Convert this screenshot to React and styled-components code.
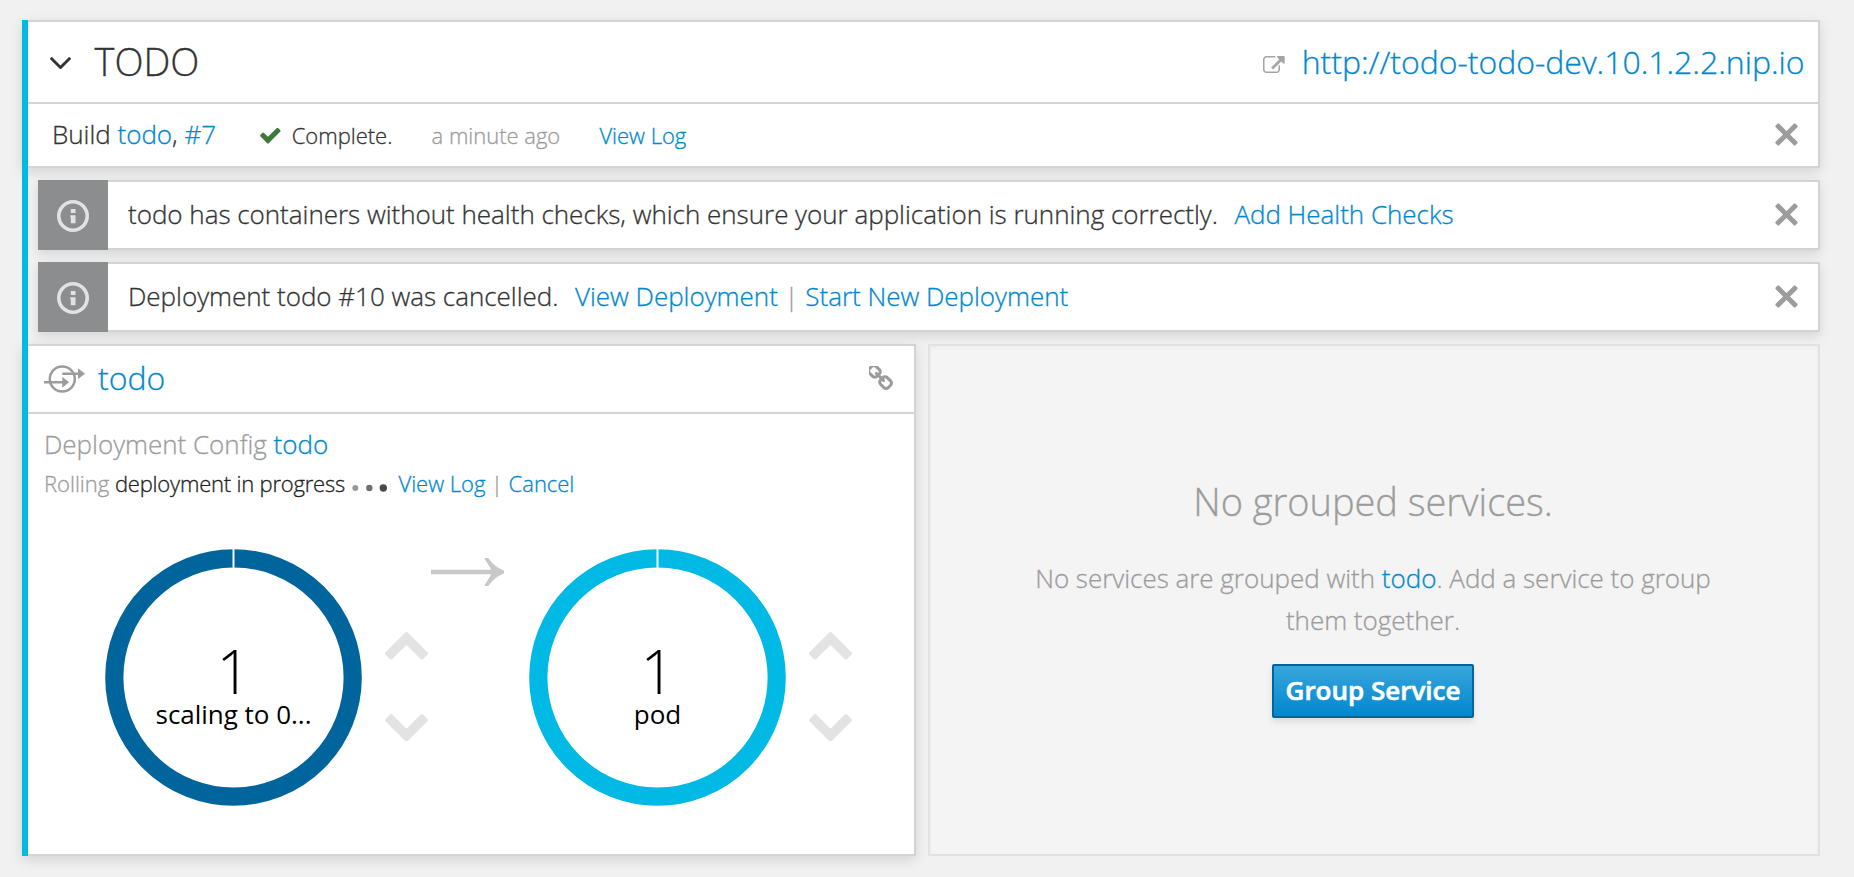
import React from 'react';
import styled, { createGlobalStyle } from 'styled-components';

const GlobalStyle = createGlobalStyle`
  * { box-sizing: border-box; }
  body {
    margin: 0;
    background: #f1f1f1;
    color: #333;
    font-family: "Open Sans", "Noto Sans", sans-serif;
    font-size: 26px;
    font-weight: 300;
    line-height: 42px;
    letter-spacing: -0.02px;
    -webkit-text-stroke: 0.3px currentColor;
  }
`;

const Page = styled.main`
  width: 1854px;
  height: 877px;
  overflow: hidden;
  padding: 20px 34px 0 22px;
`;

const ServiceGroup = styled.section`
  position: relative;
  height: 836px;
  &::before {
    content: "";
    position: absolute;
    inset: 0 auto 0 0;
    width: 6px;
    background: #00b9e4;
  }
`;

const Card = styled.div`
  border: 2px solid #d3d3d3;
  background: #fff;
  box-shadow: 0 4px 12px rgba(3, 3, 3, 0.12);
`;

const Link = styled.a`
  color: #0088ce;
  text-decoration: none;
  cursor: pointer;
`;

const Muted = styled.span`
  color: #9c9c9c;
`;

const GroupCard = styled(Card)`
  height: 148px;
`;

const GroupHeader = styled.header`
  display: flex;
  align-items: center;
  height: 82px;
  padding: 0 13.5px 2px 26px;
  border-bottom: 2px solid #d3d3d3;
`;

const GroupTitle = styled.h2`
  margin: 0 auto 0 23.5px;
  font-size: 38px;
  font-weight: 300;
  line-height: 50px;
`;

const ExternalIcon = styled.svg`
  margin-top: 8px;
`;

const AngleIcon = styled.svg`
  margin-top: 4px;
`;

const RouteLink = styled(Link)`
  margin: 2px 0 0 17px;
  font-size: 32px;
  line-height: 50px;
`;

const BuildRow = styled.div`
  display: flex;
  align-items: center;
  height: 62px;
  padding: 0 20px 2px 28px;
`;

const BuildInfo = styled.div`
  display: flex;
  flex: 1;
  align-items: baseline;
`;

const BuildStatus = styled.div`
  display: flex;
  align-items: baseline;
  gap: 39.2px;
  margin-left: 44px;
  font-size: 22px;
`;

const Complete = styled.span`
  display: flex;
  align-items: baseline;
  gap: 11px;
`;

const CloseButton = styled.button`
  display: flex;
  padding: 0;
  border: 0;
  background: none;
  cursor: pointer;
`;

const Alert = styled(Card)`
  display: flex;
  align-items: center;
  height: 70px;
  margin: 12px 0 0 16px;
  padding: 0 20px 2px 0;
  border-left: 0;
  border-radius: 0 2px 2px 0;
`;

const AlertBadge = styled.div`
  display: flex;
  align-items: center;
  justify-content: center;
  width: 70px;
  height: 70px;
  margin: 0 20px -2px 0;
  padding-top: 2px;
  background: #8b8d8f;
`;

const AlertMessage = styled.div`
  flex: 1;
`;

const AlertActions = styled.span`
  margin-left: 16.5px;
`;

const Tiles = styled.div`
  display: flex;
  gap: 12px;
  height: 512px;
  margin-top: 12px;
`;

const ServiceTile = styled(Card)`
  width: 894px;
`;

const TileHeader = styled.header`
  display: flex;
  align-items: center;
  height: 68px;
  padding: 0 21px 0 20px;
  border-bottom: 2px solid #d3d3d3;
`;

const TileTitle = styled.h3`
  margin: -2px auto 0 13px;
  font-size: 32px;
  font-weight: 300;
  line-height: 44px;
`;

const ChainIcon = styled.svg`
  margin-top: -2px;
`;

const Deployment = styled.div`
  padding: 9px 20px 0;
`;

const Progress = styled.div`
  display: flex;
  align-items: baseline;
  gap: 5.7px;
  font-size: 22px;
  line-height: 36px;
`;

const ProgressText = styled.span`
  color: #222;
  letter-spacing: -0.2px;
`;

const Dots = styled.svg`
  margin: 0 5.5px 0 1.5px;
`;

const Pods = styled.div`
  display: flex;
  align-items: flex-start;
  margin: 48px 0 0 60.5px;
`;

const Donut = styled.svg`
  display: block;
  font-family: "Open Sans", sans-serif;
  fill: #000;
  -webkit-text-stroke: 0;
`;

const Scaling = styled.div`
  display: flex;
  flex-direction: column;
  gap: 54px;
  margin: 83px 0 0 23px;
`;

const TransitionArrow = styled.svg`
  margin: 9px 25px 0 3px;
`;

const EmptyTile = styled.div`
  flex: 1;
  display: flex;
  flex-direction: column;
  align-items: center;
  padding: 130px 2px 0 0;
  border: 2px solid #e2e2e2;
  background: #f4f4f4;
  box-shadow: inset 0 2px 4px rgba(3, 3, 3, 0.03);
  color: #9c9c9c;
  text-align: center;
`;

const EmptyTitle = styled.h2`
  margin: 0;
  font-size: 38px;
  font-weight: 300;
  line-height: 50px;
`;

const EmptyText = styled.p`
  width: 720px;
  margin: 31px 0 23px;
`;

const PrimaryButton = styled.button`
  width: 202px;
  height: 54px;
  padding: 0 0 2px;
  border: 2px solid #00659c;
  border-radius: 2px;
  background: linear-gradient(#39a5dc, #0088ce);
  box-shadow: 0 4px 6px rgba(3, 3, 3, 0.1);
  color: #fff;
  font: 600 26px/42px "Open Sans", sans-serif;
  white-space: nowrap;
  -webkit-text-stroke: 0.6px currentColor;
`;

const AngleDown = () => (
  <AngleIcon width="21" height="12.3" viewBox="397 653 998 582" fill="#333">
    <path d="M1395 736q0 13-10 23l-466 466q-10 10-23 10t-23-10l-466-466q-10-10-10-23t10-23l50-50q10-10 23-10t23 10l393 393 393-393q10-10 23-10t23 10l50 50q10 10 10 23z" />
  </AngleIcon>
);

const External = () => (
  <ExternalIcon width="21.7" height="18.6" viewBox="0 0 1792 1536" fill="#a5a5a5">
    <path d="M1408 800v320q0 119-84.500 203.500t-203.500 84.500h-832q-119 0-203.500-84.500t-84.500-203.500v-832q0-119 84.500-203.500t203.500-84.500h704q14 0 23 9t9 23v64q0 14-9 23t-23 9h-704q-66 0-113 47t-47 113v832q0 66 47 113t113 47h832q66 0 113-47t47-113v-320q0-14 9-23t23-9h64q14 0 23 9t9 23zm384-736v512q0 26-19 45t-45 19-45-19l-176-176-652 652q-10 10-23 10t-23-10l-114-114q-10-10-10-23t10-23l652-652-176-176q-19-19-19-45t19-45 45-19h512q26 0 45 19t19 45z" />
  </ExternalIcon>
);

const Check = () => (
  <svg width="20.7" height="16.5" viewBox="121 270 1550 1252" fill="#3f7a3c">
    <path d="M1671 566q0 40-28 68l-724 724-136 136q-28 28-68 28t-68-28l-136-136-362-362q-28-28-28-68t28-68l136-136q28-28 68-28t68 28l294 295 656-657q28-28 68-28t68 28l136 136q28 28 28 68z" />
  </svg>
);

const Close = () => (
  <CloseButton aria-label="Close">
    <svg width="23" height="23" viewBox="-11.5 -11.5 23 23" fill="#9c9c9c">
      <rect x="-14" y="-2.5" width="28" height="5" rx="1.5" transform="rotate(45)" />
      <rect x="-14" y="-2.5" width="28" height="5" rx="1.5" transform="rotate(-45)" />
    </svg>
  </CloseButton>
);

const Info = () => (
  <svg width="32" height="32" viewBox="0 0 32 32" fill="#e2e2e2">
    <circle cx="16" cy="16" r="14.2" fill="none" stroke="#e2e2e2" strokeWidth="3.6" />
    <path d="M13.8 9h4.700v4h-4.700zM13.3 15.200h5.200v8h-4.700v-6h-.5z" />
  </svg>
);

const ServiceIcon = () => (
  <svg width="41" height="28" viewBox="0 0 41 28" fill="#9c9c9c">
    <circle cx="18.3" cy="14" r="12.5" fill="none" stroke="#9c9c9c" strokeWidth="2.5" />
    <path d="M18.3 7.400h15.700V3.300l7 5.400-7 5.300V10h-15.700zM0 16.100h18.300v-4.300l6.700 5.500-6.700 5.500v-4.300H0z" />
  </svg>
);

const Chain = () => (
  <ChainIcon width="24" height="24" viewBox="144 144 1504 1504" fill="#9c9c9c">
    <path d="M1456 1216q0-40-28-68l-208-208q-28-28-68-28-42 0-72 32 3 3 19 18.500t21.500 21.500 15 19 13 25.500 3.500 27.500q0 40-28 68t-68 28q-15 0-27.500-3.500t-25.500-13-19-15-21.500-21.500-18.500-19q-33 31-33 73 0 40 28 68l206 207q27 27 68 27 40 0 68-26l147-146q28-28 28-67zm-703-705q0-40-28-68l-206-207q-28-28-68-28-39 0-68 27l-147 146q-28 28-28 67 0 40 28 68l208 208q27 27 68 27 42 0 72-31-3-3-19-18.500t-21.500-21.500-15-19-13-25.500-3.500-27.500q0-40 28-68t68-28q15 0 27.500 3.500t25.500 13 19 15 21.500 21.500 18.500 19q33-31 33-73zm895 705q0 120-85 203l-147 146q-83 83-203 83-121 0-204-85l-206-207q-83-83-83-203 0-123 88-209l-88-88q-86 88-208 88-120 0-204-84l-208-208q-84-84-84-204t85-203l147-146q83-83 203-83 121 0 204 85l206 207q83 83 83 203 0 123-88 209l88 88q86-88 208-88 120 0 204 84l208 208q84 84 84 204z" />
  </ChainIcon>
);

const Chevron = ({ up }) => (
  <svg width="43" height="27.6" viewBox="90 533 1612 1035" fill="#e3e3e3">
    <path
      transform={up ? 'rotate(180 896 1050.5)' : undefined}
      d="M1683 808l-742 741q-19 19-45 19t-45-19l-742-741q-19-19-19-45.500t19-45.500l166-165q19-19 45-19t45 19l531 531 531-531q19-19 45-19t45 19l166 165q19 19 19 45.500t-19 45.500z"
    />
  </svg>
);

const PodDonut = ({ color, count, label }) => (
  <Donut width="257" height="257" viewBox="-128.5 -128.5 257 257" textAnchor="middle">
    <circle r="119.2" fill="none" stroke={color} strokeWidth="18.2" />
    <path d="M0-129v20" stroke="#fff" strokeWidth="2" />
    <text y="16" fontSize="60" fontWeight="300">{count}</text>
    <text y="46" fontSize="26" fontWeight="400">{label}</text>
  </Donut>
);

const Scaler = () => (
  <Scaling>
    <Chevron up />
    <Chevron />
  </Scaling>
);

export default function App() {
  return (
    <Page>
      <GlobalStyle />
      <ServiceGroup>
        <GroupCard>
          <GroupHeader>
            <AngleDown />
            <GroupTitle>TODO</GroupTitle>
            <External />
            <RouteLink>http://todo-todo-dev.10.1.2.2.nip.io</RouteLink>
          </GroupHeader>
          <BuildRow>
            <BuildInfo>
              <span>
                Build <Link>todo</Link>, <Link>#7</Link>
              </span>
              <BuildStatus>
                <Complete>
                  <Check /> Complete.
                </Complete>
                <Muted>a minute ago</Muted>
                <Link>View Log</Link>
              </BuildStatus>
            </BuildInfo>
            <Close />
          </BuildRow>
        </GroupCard>
        <Alert>
          <AlertBadge>
            <Info />
          </AlertBadge>
          <AlertMessage>
            todo has containers without health checks, which ensure your application is running correctly.
            <AlertActions>
              <Link>Add Health Checks</Link>
            </AlertActions>
          </AlertMessage>
          <Close />
        </Alert>
        <Alert>
          <AlertBadge>
            <Info />
          </AlertBadge>
          <AlertMessage>
            Deployment todo #10 was cancelled.
            <AlertActions>
              <Link>View Deployment</Link> <Muted>|</Muted> <Link>Start New Deployment</Link>
            </AlertActions>
          </AlertMessage>
          <Close />
        </Alert>
        <Tiles>
          <ServiceTile>
            <TileHeader>
              <ServiceIcon />
              <TileTitle>
                <Link>todo</Link>
              </TileTitle>
              <Chain />
            </TileHeader>
            <Deployment>
              <div>
                <Muted>Deployment Config</Muted> <Link>todo</Link>
              </div>
              <Progress>
                <Muted>Rolling</Muted>
                <ProgressText>deployment in progress</ProgressText>
                <Dots width="35" height="8" viewBox="0 0 35 8">
                  <circle cx="3.3" cy="4" r="3" fill="#999" />
                  <circle cx="17.3" cy="4" r="3.2" fill="#707070" />
                  <circle cx="31.3" cy="4" r="3.7" fill="#4a4a4a" />
                </Dots>
                <span>
                  <Link>View Log</Link> <Muted>|</Muted> <Link>Cancel</Link>
                </span>
              </Progress>
              <Pods>
                <PodDonut color="#00659c" count="1" label="scaling to 0..." />
                <Scaler />
                <TransitionArrow width="73.3" height="28" viewBox="0 0 73.3 28" fill="#c8c8c8">
                  <path d="M0 11.800H60.300Q57 6 53.300.3V0H57.300Q63 8.500 73.300 13V15Q63 19.500 57.300 28H53.300V27.700Q57 22 60.300 16.200H0Z" />
                </TransitionArrow>
                <PodDonut color="#00b9e4" count="1" label="pod" />
                <Scaler />
              </Pods>
            </Deployment>
          </ServiceTile>
          <EmptyTile>
            <EmptyTitle>No grouped services.</EmptyTitle>
            <EmptyText>
              No services are grouped with <Link>todo</Link>. Add a service to group them together.
            </EmptyText>
            <PrimaryButton>Group Service</PrimaryButton>
          </EmptyTile>
        </Tiles>
      </ServiceGroup>
    </Page>
  );
}
